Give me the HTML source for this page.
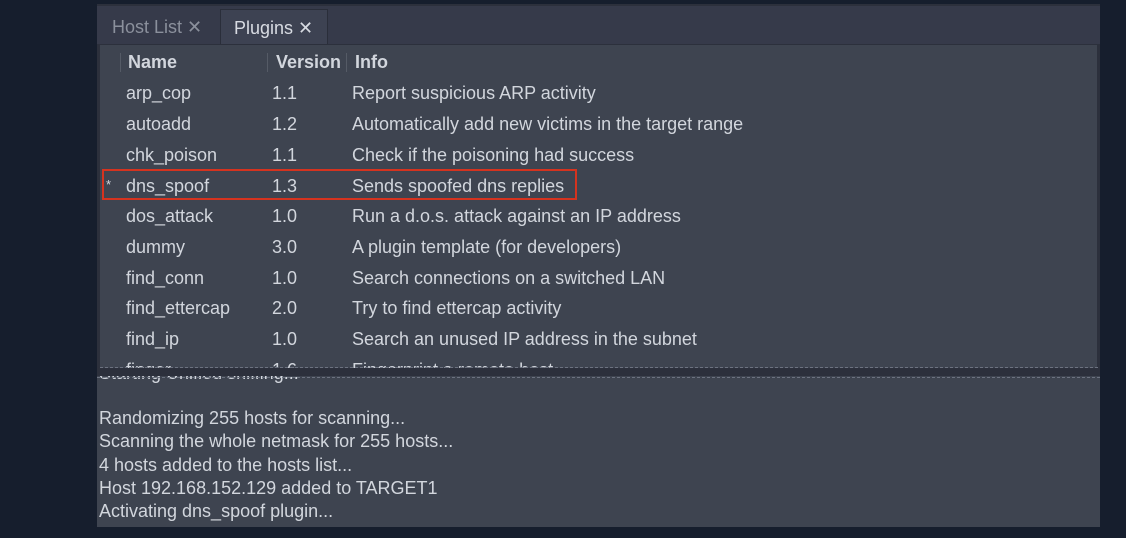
<!DOCTYPE html>
<html><head><style>
body{margin:0;width:1126px;height:538px;background:#161e2d;overflow:hidden;font-family:"Liberation Sans","DejaVu Sans",sans-serif;position:relative}
.win{position:absolute;left:97px;top:4px;width:1003px;height:523px;background:#2c303c}
.tabbar{position:absolute;left:97px;top:6px;width:1003px;height:38px;background:#363a4a}
.tab{position:absolute;top:9px;height:35px;font-size:18px;line-height:36px;color:#8b909c}
.tab.act{background:#3d4252;color:#d8dbe2;border:1px solid #2a2e3a;border-bottom:none}
.panel{position:absolute;left:100px;top:45px;width:997px;height:323px;background:#3e4450;overflow:hidden}
.t{position:absolute;font-size:18px;color:#d2d6dd;white-space:nowrap;line-height:20px}
.h{font-weight:bold;color:#d2d6dd}
.sep{position:absolute;top:8px;width:1px;height:19px;background:#555b66}
.dash{position:absolute;left:100px;width:998px;height:0;border-top:1px dashed #6c7280}
.band{position:absolute;left:97px;top:369px;width:1003px;height:7px;background:#2c303c}
.log{position:absolute;left:97px;top:376px;width:1003px;height:151px;background:#3e4450;overflow:hidden}
.l{position:absolute;left:2px;font-size:18px;color:#d2d6dd;white-space:nowrap;line-height:20px}
.box{position:absolute;left:102px;top:169px;width:471px;height:27px;border:2px solid #d5331f}
</style></head><body>
<div class="win"></div>
<div class="tabbar"></div>
<div class="tab" style="left:97px;width:122px;padding-left:15px;box-sizing:border-box">Host List ✕</div>
<div class="tab act" style="left:220px;width:108px;padding-left:13px;box-sizing:border-box">Plugins ✕</div>
<div class="panel">
<div class="sep" style="left:20px"></div><div class="sep" style="left:167px"></div><div class="sep" style="left:246px"></div>
<div class="t h" style="left:28px;top:7px">Name</div>
<div class="t h" style="left:176px;top:7px">Version</div>
<div class="t h" style="left:255px;top:7px">Info</div>
<div class="t" style="left:26px;top:38px">arp_cop</div><div class="t" style="left:172px;top:38px">1.1</div><div class="t" style="left:252px;top:38px">Report suspicious ARP activity</div>
<div class="t" style="left:26px;top:69px">autoadd</div><div class="t" style="left:172px;top:69px">1.2</div><div class="t" style="left:252px;top:69px">Automatically add new victims in the target range</div>
<div class="t" style="left:26px;top:100px">chk_poison</div><div class="t" style="left:172px;top:100px">1.1</div><div class="t" style="left:252px;top:100px">Check if the poisoning had success</div>
<div class="t" style="left:6px;top:130px;font-size:13px">*</div><div class="t" style="left:26px;top:131px">dns_spoof</div><div class="t" style="left:172px;top:131px">1.3</div><div class="t" style="left:252px;top:131px">Sends spoofed dns replies</div>
<div class="t" style="left:26px;top:161px">dos_attack</div><div class="t" style="left:172px;top:161px">1.0</div><div class="t" style="left:252px;top:161px">Run a d.o.s. attack against an IP address</div>
<div class="t" style="left:26px;top:192px">dummy</div><div class="t" style="left:172px;top:192px">3.0</div><div class="t" style="left:252px;top:192px">A plugin template (for developers)</div>
<div class="t" style="left:26px;top:223px">find_conn</div><div class="t" style="left:172px;top:223px">1.0</div><div class="t" style="left:252px;top:223px">Search connections on a switched LAN</div>
<div class="t" style="left:26px;top:253px">find_ettercap</div><div class="t" style="left:172px;top:253px">2.0</div><div class="t" style="left:252px;top:253px">Try to find ettercap activity</div>
<div class="t" style="left:26px;top:284px">find_ip</div><div class="t" style="left:172px;top:284px">1.0</div><div class="t" style="left:252px;top:284px">Search an unused IP address in the subnet</div>
<div class="t" style="left:26px;top:315px">finger</div><div class="t" style="left:172px;top:315px">1.6</div><div class="t" style="left:252px;top:315px">Fingerprint a remote host</div>
</div>
<div class="box"></div>
<div class="dash" style="top:367px"></div>
<div class="band"></div>
<div class="log">
<div class="l" style="top:-13px">Starting Unified sniffing...</div>
<div class="l" style="top:32px">Randomizing 255 hosts for scanning...</div>
<div class="l" style="top:55px">Scanning the whole netmask for 255 hosts...</div>
<div class="l" style="top:79px">4 hosts added to the hosts list...</div>
<div class="l" style="top:102px">Host 192.168.152.129 added to TARGET1</div>
<div class="l" style="top:125px">Activating dns_spoof plugin...</div>
</div>
<div class="dash" style="top:377px;left:97px;width:1003px"></div>
</body></html>
